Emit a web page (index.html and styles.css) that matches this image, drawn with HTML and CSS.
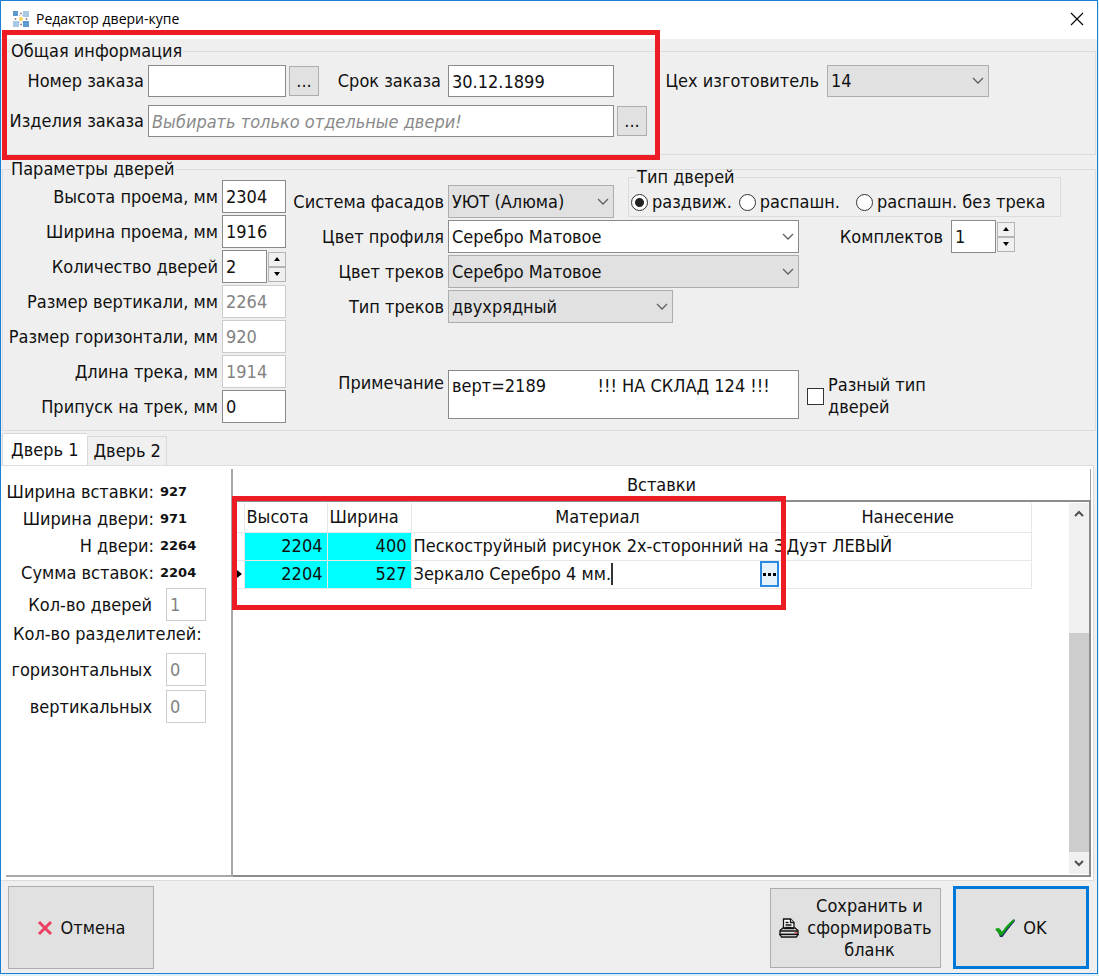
FILE: index.html
```html
<!DOCTYPE html>
<html lang="ru">

<head>
  <meta charset="UTF-8" />
  <meta name="viewport" content="width=device-width, initial-scale=1" />
  <title>Редактор двери-купе</title>
  <link rel="stylesheet" href="styles.css">
</head>

<body>
  <form class="window">
    <header class="titlebar">
      <svg class="app-icon" width="16" height="16" viewBox="0 0 16 16" aria-hidden="true">
        <rect x="0" y="0" width="5" height="5" fill="#5b9bd0" />
        <rect x="10" y="0" width="6" height="6" fill="#a9c8e4" />
        <rect x="0" y="10" width="6" height="6" fill="#a9c8e4" />
        <rect x="10" y="10" width="6" height="6" fill="#5b9bd0" />
        <circle cx="8" cy="8" r="2.2" fill="#f5d76a" />
        <path d="M7 2.500h2M7 13.500h2M2.500 7v2M13.500 7v2" stroke="#8c8c94" stroke-width="1.500" />
        <path d="M6 4l1 1M10 4L9 5M6 12l1-1M10 12l-1-1" stroke="#b9c4cf" />
      </svg>
      <h1>Редактор двери-купе</h1>
      <button type="button" class="close" aria-label="Закрыть">
        <svg width="14" height="14" viewBox="0 0 14 14"><path d="M1 1l12 12M13 1L1 13" stroke="#000" stroke-width="1.100" /></svg>
      </button>
    </header>

    <fieldset class="group general">
      <legend>Общая информация</legend>
      <div class="row">
        <label class="lbl-order" for="orderNo">Номер заказа</label>
        <input id="orderNo" class="field w-order" type="text">
        <button type="button" class="dots" aria-label="Выбрать заказ">...</button>
        <label class="lbl-date" for="orderDate">Срок заказа</label>
        <input id="orderDate" class="field w-date" type="text" value="30.12.1899">
        <label class="lbl-shop" for="shop">Цех изготовитель</label>
        <select id="shop" class="field combo w-shop"><option>14</option></select>
      </div>
      <div class="row">
        <label class="lbl-order" for="items">Изделия заказа</label>
        <input id="items" class="field w-items" type="text" placeholder="Выбирать только отдельные двери!">
        <button type="button" class="dots" aria-label="Выбрать изделия">...</button>
      </div>
    </fieldset>

    <fieldset class="group params">
      <legend>Параметры дверей</legend>
      <div class="params-body">
        <div class="sizes">
          <label for="h">Высота проема, мм</label>
          <input id="h" class="field" type="text" value="2304">
          <label for="w">Ширина проема, мм</label>
          <input id="w" class="field" type="text" value="1916">
          <label for="count">Количество дверей</label>
          <div class="spin">
            <input id="count" class="field" type="text" value="2">
            <div class="spin-btns">
              <button type="button" aria-label="Больше"><svg width="6" height="4" viewBox="0 0 6 4"><path d="M3 0l3 4H0z" /></svg></button>
              <button type="button" aria-label="Меньше"><svg width="6" height="4" viewBox="0 0 6 4"><path d="M0 0h6L3 4z" /></svg></button>
            </div>
          </div>
          <label for="sv">Размер вертикали, мм</label>
          <input id="sv" class="field" type="text" value="2264" disabled>
          <label for="sh">Размер горизонтали, мм</label>
          <input id="sh" class="field" type="text" value="920" disabled>
          <label for="track">Длина трека, мм</label>
          <input id="track" class="field" type="text" value="1914" disabled>
          <label for="allow">Припуск на трек, мм</label>
          <input id="allow" class="field" type="text" value="0">
        </div>

        <div class="options">
          <div class="opt">
            <label class="lbl-opt" for="system">Система фасадов</label>
            <select id="system" class="field combo w-date"><option>УЮТ (Алюма)</option></select>
            <fieldset class="group door-type">
              <legend>Тип дверей</legend>
              <div class="radios">
                <label><input type="radio" name="type" checked>раздвиж.</label>
                <label><input type="radio" name="type">распашн.</label>
                <label class="last"><input type="radio" name="type">распашн. без трека</label>
              </div>
            </fieldset>
          </div>
          <div class="opt">
            <label class="lbl-opt" for="profile">Цвет профиля</label>
            <select id="profile" class="field combo combo-edit w-wide"><option>Серебро Матовое</option></select>
            <label class="lbl-sets" for="sets">Комплектов</label>
            <div class="spin">
              <input id="sets" class="field" type="text" value="1">
              <div class="spin-btns">
                <button type="button" aria-label="Больше"><svg width="6" height="4" viewBox="0 0 6 4"><path d="M3 0l3 4H0z" /></svg></button>
                <button type="button" aria-label="Меньше"><svg width="6" height="4" viewBox="0 0 6 4"><path d="M0 0h6L3 4z" /></svg></button>
              </div>
            </div>
          </div>
          <div class="opt">
            <label class="lbl-opt" for="trackColor">Цвет треков</label>
            <select id="trackColor" class="field combo w-wide"><option>Серебро Матовое</option></select>
          </div>
          <div class="opt">
            <label class="lbl-opt" for="trackType">Тип треков</label>
            <select id="trackType" class="field combo w-track"><option>двухрядный</option></select>
          </div>
          <div class="opt opt-note">
            <label class="lbl-opt" for="note">Примечание</label>
            <textarea id="note" class="field w-wide" rows="1">верт=2189          !!! НА СКЛАД 124 !!!</textarea>
            <label class="check"><input type="checkbox"><span>Разный тип<br>дверей</span></label>
          </div>
        </div>
      </div>
    </fieldset>

    <div class="tabs" role="tablist">
      <button type="button" role="tab" class="tab active" aria-selected="true">Дверь 1</button>
      <button type="button" role="tab" class="tab" aria-selected="false">Дверь 2</button>
    </div>

    <main class="pane">
      <aside class="summary">
        <dl>
          <dt>Ширина вставки:</dt><dd>927</dd>
          <dt>Ширина двери:</dt><dd>971</dd>
          <dt>Н двери:</dt><dd>2264</dd>
          <dt>Сумма вставок:</dt><dd>2204</dd>
        </dl>
        <div class="counts">
          <label for="doors">Кол-во дверей</label>
          <input id="doors" class="field" type="text" value="1" disabled>
        </div>
        <p>Кол-во разделителей:</p>
        <div class="counts">
          <label for="divH">горизонтальных</label>
          <input id="divH" class="field" type="text" value="0" disabled>
          <label for="divV">вертикальных</label>
          <input id="divV" class="field" type="text" value="0" disabled>
        </div>
      </aside>

      <section class="inserts">
        <h2>Вставки</h2>
        <div class="grid-box">
          <div class="grid-area">
            <table>
              <colgroup>
                <col class="c-mark"><col class="c-h"><col class="c-w"><col class="c-mat"><col class="c-app">
              </colgroup>
              <thead>
                <tr><th></th><th class="left">Высота</th><th class="left">Ширина</th><th>Материал</th><th>Нанесение</th></tr>
              </thead>
              <tbody>
                <tr>
                  <td></td>
                  <td class="num">2204</td>
                  <td class="num">400</td>
                  <td class="mat">Пескоструйный рисунок 2х-сторонний на З</td>
                  <td class="app">Дуэт ЛЕВЫЙ</td>
                </tr>
                <tr>
                  <td class="mark"><svg width="5" height="8" viewBox="0 0 5 8"><path d="M0 0l5 4-5 4z" /></svg></td>
                  <td class="num">2204</td>
                  <td class="num">527</td>
                  <td class="mat">
                    <div class="edit">
                      <span class="caret">Зеркало Серебро 4 мм.</span>
                      <button type="button" aria-label="Выбрать материал"><svg width="13" height="3" viewBox="0 0 13 3"><path d="M0 0h3v3H0zM5 0h3v3H5zM10 0h3v3h-3z" /></svg></button>
                    </div>
                  </td>
                  <td></td>
                </tr>
              </tbody>
            </table>
          </div>
          <div class="scroll">
            <svg width="20" height="22" viewBox="0 0 20 22"><path d="M6 13l4-4 4 4" fill="none" stroke="#505050" stroke-width="2" /></svg>
            <div class="scroll-track"><div class="thumb"></div></div>
            <svg width="20" height="22" viewBox="0 0 20 22"><path d="M6 9l4 4 4-4" fill="none" stroke="#505050" stroke-width="2" /></svg>
          </div>
        </div>
      </section>
    </main>

    <footer class="actions">
      <button type="button" class="btn cancel">
        <svg width="16" height="16" viewBox="0 0 16 16"><path d="M2 2l12 12M14 2L2 14" stroke="#ec3f62" stroke-width="3" /></svg>
        Отмена
      </button>
      <button type="button" class="btn save">
        <svg width="20" height="20" viewBox="0 0 20 20" fill="#fff" stroke="#111" stroke-width="1.300">
          <path d="M4.500 11V1h7l3.500 3.500V11" />
          <path d="M11.500 1v3.500H15M6.500 4.500h3M6.500 7h6M6.500 9.500h6" />
          <path d="M1 12.500L4 10h12l3 2.500v4H1z" fill="#e4e4e4" />
          <path d="M4.500 10.500h10.500M1 13h18" />
          <path d="M1 16.500h18L17.500 19h-15z" />
          <path d="M15.500 14.800H18" stroke="#e23b3b" />
        </svg>
        <span>Сохранить и<br>сформировать<br>бланк</span>
      </button>
      <button type="submit" class="btn ok">
        <svg width="20" height="20" viewBox="0 0 20 20">
          <path d="M1 12l4-1 2 3Q12 7 19 1l1 2Q13 11 7.500 19H5Q4 15 1 12z" fill="#1c2a6b" />
          <path d="M0 11q2-1 4-1l3 4Q12 6 19 1v2Q13 9 7 17.500H5Q3.500 14 0 11z" fill="#12a512" />
        </svg>
        OK
      </button>
    </footer>

    <div class="frame frame-general"></div>
    <div class="frame frame-inserts"></div>
  </form>
</body>

</html>
```
FILE: styles.css
```css
* {
  box-sizing: border-box;
}

body {
  margin: 0;
  padding: 0 1px 2px 0;
  min-height: 100vh;
  display: flex;
  background-color: #dff0f8;
  font-family: "DejaVu Sans Condensed", "Noto Sans", sans-serif;
  font-size: 18px;
  line-height: 22px;
  color: #111;
}

input,
select,
textarea,
button {
  font: inherit;
  color: inherit;
  margin: 0;
}

button {
  padding: 0;
}

svg {
  display: block;
  flex: none;
}

.window {
  position: relative;
  flex: 1;
  min-width: 0;
  display: flex;
  flex-direction: column;
  background-color: #efefef;
  border: 1px solid #1a7fd6;
}

/* title bar */
.titlebar {
  display: flex;
  align-items: center;
  height: 38px;
  padding: 0 13px 2px 12px;
  background-color: #fff;
}

.titlebar h1 {
  flex: 1;
  margin: 0 0 0 7px;
  font-family: "Open Sans", sans-serif;
  font-size: 14px;
  font-weight: normal;
  color: #000;
}

.close {
  border: none;
  background: none;
}

/* group boxes */
.group {
  min-width: 0;
  margin: 0;
  padding: 0;
  border: 1px solid #dcdcdc;
}

.group legend {
  margin-left: 7px;
  padding: 0 1px;
}

.general {
  margin: 1px 1px 0 1px;
}

.general .row {
  display: flex;
  align-items: center;
  padding-top: 3px;
}

.general .row + .row {
  padding: 8px 0 17px;
}

.field {
  height: 33px;
  padding: 0 3px;
  border: 1px solid #8a8a8a;
  border-radius: 0;
  background-color: #fff;
  outline: none;
}

.field:disabled {
  border-color: #cccccc;
  color: #838383;
}

.field::placeholder {
  color: #8a8a8a;
  font-style: italic;
}

.general .field {
  height: 32px;
}

.combo {
  appearance: none;
  border-color: #adadad;
  background: #e1e1e1 url("data:image/svg+xml,%3Csvg xmlns='http://www.w3.org/2000/svg' width='12' height='8'%3E%3Cpath d='M1 1l5 5 5-5' fill='none' stroke='%23606060' stroke-width='1.3'/%3E%3C/svg%3E") no-repeat right 4px center;
}

.combo-edit {
  border-color: #8a8a8a;
  background-color: #fff;
}

.lbl-order {
  width: 145px;
  padding-right: 4px;
  text-align: right;
  white-space: nowrap;
}

.lbl-date {
  width: 129px;
  padding-right: 7px;
  text-align: right;
}

.lbl-shop {
  width: 213px;
  padding-right: 8px;
  text-align: right;
}

.w-order {
  width: 138px;
}

.w-date {
  width: 166px;
}

.w-shop {
  width: 162px;
}

.w-items {
  width: 466px;
}

.w-wide {
  width: 351px;
}

.w-track {
  width: 225px;
}

.dots {
  width: 30px;
  height: 30px;
  margin-left: 3px;
  border: 1px solid #adadad;
  background-color: #e1e1e1;
}

/* door parameters */
.params {
  margin: 3px 1px 0 1px;
}

.params-body {
  display: flex;
  padding-bottom: 7px;
}

.sizes {
  display: grid;
  grid-template-columns: 215px 64px;
  column-gap: 4px;
  row-gap: 2px;
  align-items: center;
  text-align: right;
  white-space: nowrap;
}

.sizes .field {
  width: 64px;
}

.sizes .spin .field,
.spin .field {
  width: 45px;
}

.spin {
  display: flex;
  align-items: center;
  gap: 1px;
}

.spin-btns {
  display: grid;
}

.spin-btns button {
  display: flex;
  align-items: center;
  justify-content: center;
  width: 18px;
  height: 15px;
  border: 1px solid #b4b4b4;
  background-color: #f0f0f0;
}

.options {
  flex: 1;
  padding-top: 5px;
  display: flex;
  flex-direction: column;
  gap: 2px;
}

.opt {
  display: flex;
  align-items: center;
}

.lbl-opt {
  width: 162px;
  padding-right: 4px;
  text-align: right;
}

.door-type {
  width: 433px;
  margin: -20px 0 0 14px;
}

.radios {
  display: flex;
  padding: 3px 0 3px 2px;
}

.radios label {
  display: flex;
  align-items: center;
  gap: 4px;
  margin-right: 7px;
  white-space: nowrap;
}

.radios .last {
  margin: 0 0 0 9px;
}

.radios input,
.check input {
  appearance: none;
  flex: none;
  width: 17px;
  height: 17px;
  margin: 0;
  border: 1px solid #333;
  background-color: #fff;
}

.radios input {
  border-radius: 50%;
}

.radios input:checked {
  background: radial-gradient(circle, #222 4px, #fff 5px);
}

.lbl-sets {
  width: 152px;
  padding-right: 8px;
  text-align: right;
}

.opt-note {
  flex: 1;
  align-items: flex-end;
  padding-bottom: 4px;
}

.opt-note .lbl-opt {
  padding-bottom: 25px;
}

textarea.field {
  height: 49px;
  padding-top: 4px;
  resize: none;
  overflow: hidden;
}

.check {
  display: flex;
  align-items: center;
  gap: 4px;
  margin-left: 8px;
  padding-bottom: 1px;
}

/* tabs */
.tabs {
  display: flex;
  align-items: flex-end;
  margin: 2px 0 0 1px;
}

.tab {
  height: 29px;
  padding: 0 5px;
  border: 1px solid #d9d9d9;
  border-bottom: none;
  background-color: #f0f0f0;
}

.tab.active {
  height: 32px;
  padding: 0 9px 0 8px;
  border-right: none;
  background-color: #fff;
}

.pane {
  flex: 1;
  display: flex;
  margin-right: 3px;
  padding: 3px 2px 3px 5px;
  border: 1px solid #dcdcdc;
  border-left: none;
  background-color: #fff;
}

.summary {
  width: 225px;
  border-bottom: 2px solid #a8a8a8;
}

.summary dl {
  display: grid;
  grid-template-columns: 148px 1fr;
  grid-auto-rows: 27px;
  column-gap: 6px;
  align-items: center;
  margin: 9px 0 0;
  text-align: right;
  white-space: nowrap;
}

.summary dd {
  margin: 0;
  text-align: left;
  font-family: "DejaVu Sans", sans-serif;
  font-size: 13px;
  font-weight: bold;
}

.summary p {
  margin: 2px 0 6px 7px;
}

.counts {
  display: grid;
  grid-template-columns: 146px 40px;
  column-gap: 14px;
  row-gap: 4px;
  align-items: center;
  text-align: right;
  padding-top: 2px;
}

.inserts {
  flex: 1;
  min-width: 0;
  display: flex;
  flex-direction: column;
  border-left: 2px solid #a8a8a8;
}

.inserts h2 {
  height: 31px;
  margin: 0;
  line-height: 32px;
  border-right: 1px solid #a0a0a0;
  font-size: 18px;
  font-weight: normal;
  text-align: center;
}

.grid-box {
  flex: 1;
  display: flex;
  justify-content: space-between;
  border: 2px solid #8c8c8c;
  border-left: none;
}

.grid-area {
  padding-top: 1px;
}

.grid-area table {
  width: 799px;
  table-layout: fixed;
  border-collapse: collapse;
}

.c-mark {
  width: 11px;
}

.c-h {
  width: 83px;
}

.c-w {
  width: 84px;
}

.c-mat {
  width: 373px;
}

.grid-area th,
.grid-area td {
  height: 28px;
  padding: 0 4px;
  border: 1px solid #e8e8e8;
  border-top: none;
  border-left: none;
  font-weight: normal;
  white-space: nowrap;
  overflow: hidden;
}

.grid-area th {
  height: 29px;
}

.grid-area th.left {
  padding-left: 2px;
  text-align: left;
}

.grid-area td.num {
  background-color: #0ff;
  text-align: right;
}

.grid-area td.mark {
  padding: 0 0 0 4px;
}

.grid-area td.mat {
  padding: 0 0 0 2px;
}

.grid-area td.app {
  padding-left: 2px;
}

.edit {
  display: flex;
  align-items: center;
  justify-content: space-between;
  padding-right: 5px;
}

.edit .caret {
  border-right: 2px solid #333;
}

.edit button {
  display: flex;
  align-items: center;
  justify-content: center;
  width: 19px;
  height: 26px;
  border: 2px solid #2a8ae0;
  background-color: #e5f1fb;
}

.scroll {
  display: flex;
  flex-direction: column;
  width: 20px;
  margin: 1px 0 1px 0;
  background-color: #f0f0f0;
}

.scroll-track {
  flex: 1;
  display: flex;
  flex-direction: column;
  justify-content: flex-end;
}

.thumb {
  height: 67%;
  background-color: #cdcdcd;
}

/* bottom buttons */
.actions {
  display: flex;
  align-items: center;
  gap: 12px;
  padding: 5px 8px 4px 7px;
}

.btn {
  display: flex;
  align-items: center;
  justify-content: center;
  gap: 8px;
  height: 83px;
  border: 1px solid #adadad;
  background-color: #e1e1e1;
}

.cancel {
  width: 146px;
  margin-right: auto;
}

.save {
  width: 171px;
  height: 80px;
}

.ok {
  width: 136px;
  border: 3px solid #0078d7;
}

/* red highlight frames */
.frame {
  position: absolute;
  border: 5px solid #ed1c24;
  pointer-events: none;
}

.frame-general {
  left: 1px;
  top: 29px;
  width: 658px;
  height: 130px;
}

.frame-inserts {
  left: 231px;
  top: 495px;
  width: 554px;
  height: 114px;
}
```
